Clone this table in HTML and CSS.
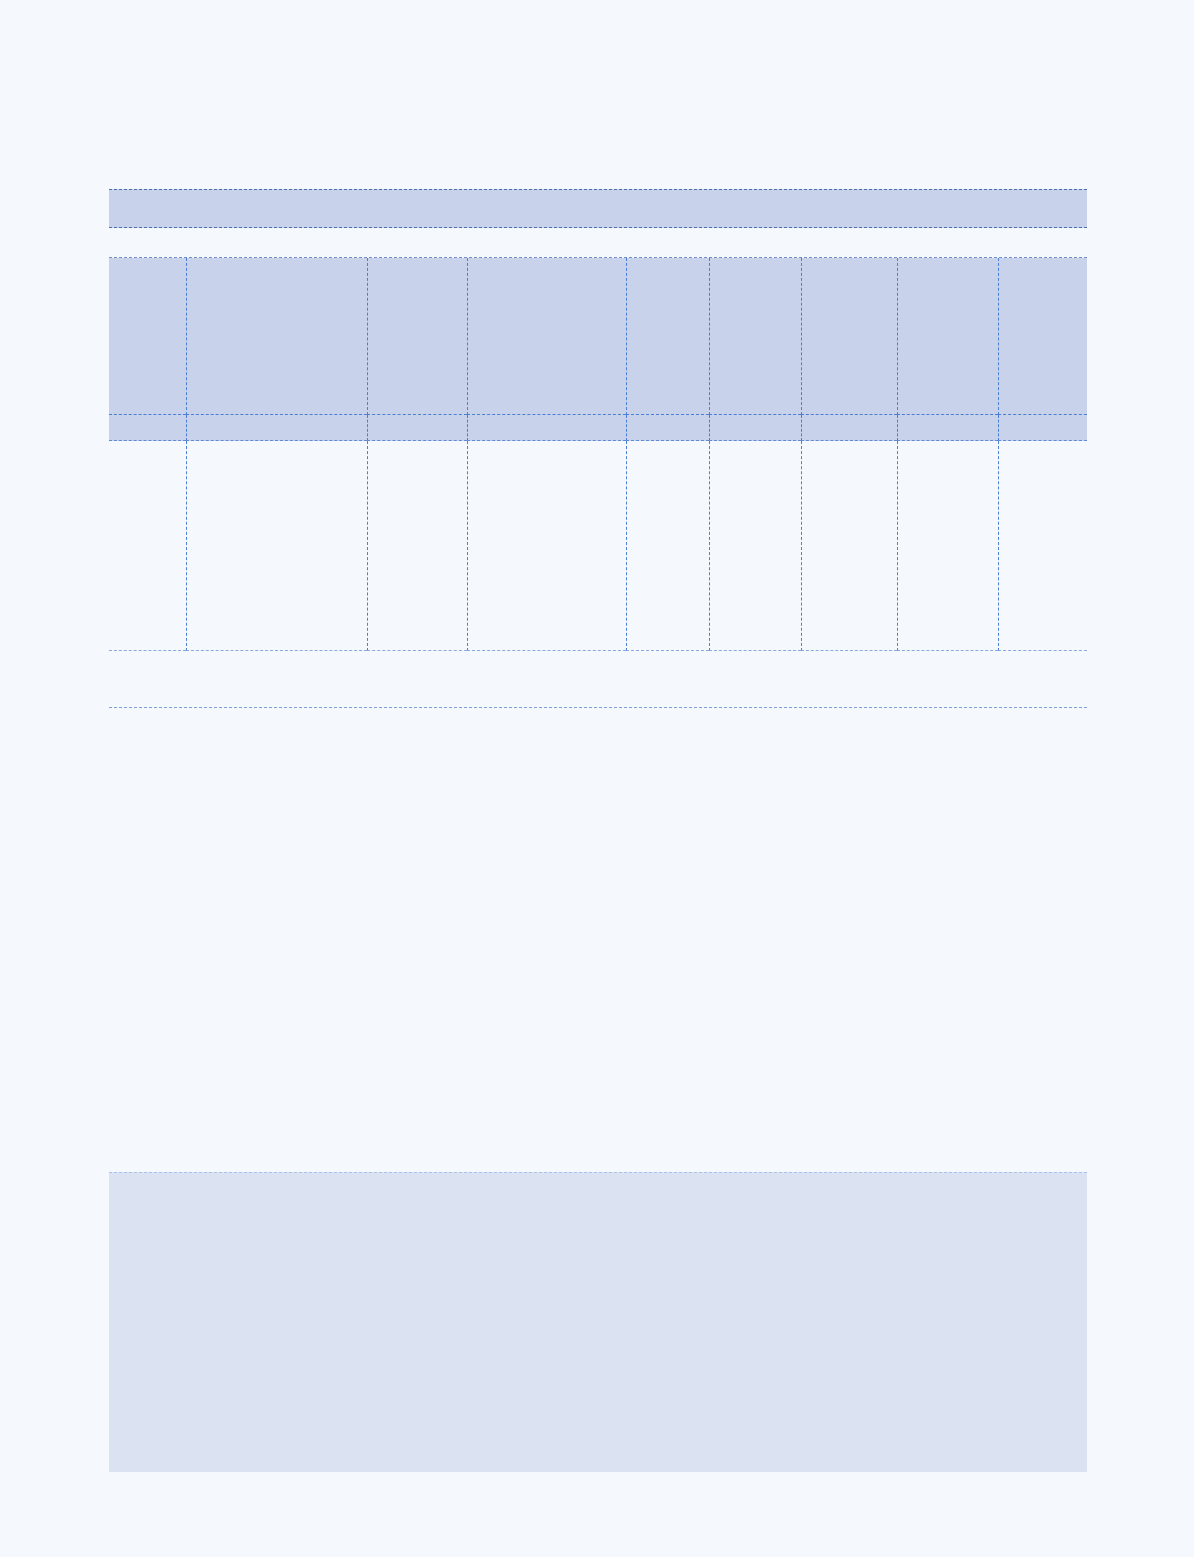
FILE: index.html
```html
<!DOCTYPE html>
<html lang="en">
<head>
<meta charset="utf-8">
<title>Layout</title>
<link rel="stylesheet" href="styles.css">
</head>
<body>
<main class="page">
  <div class="band"></div>
  <section class="grid">
    <div class="cell head1 first"></div><div class="cell head1"></div><div class="cell head1"></div><div class="cell head1"></div><div class="cell head1"></div><div class="cell head1"></div><div class="cell head1"></div><div class="cell head1"></div><div class="cell head1"></div>
    <div class="cell head2 first"></div><div class="cell head2"></div><div class="cell head2"></div><div class="cell head2"></div><div class="cell head2"></div><div class="cell head2"></div><div class="cell head2"></div><div class="cell head2"></div><div class="cell head2"></div>
    <div class="cell body first"></div><div class="cell body"></div><div class="cell body"></div><div class="cell body"></div><div class="cell body"></div><div class="cell body"></div><div class="cell body"></div><div class="cell body"></div><div class="cell body"></div>
    <div class="foot"></div>
  </section>
  <section class="panel"></section>
</main>
</body>
</html>
```
FILE: styles.css
```css
html, body {
  margin: 0;
  padding: 0;
  background: #f5f8fd;
  font-family: "Liberation Sans", Arial, sans-serif;
}

.page {
  width: 978px;
  margin: 0 auto;
  padding: 189px 0 86px 1px;
  box-sizing: content-box;
}

.band {
  height: 39px;
  box-sizing: border-box;
  background: #c8d2eb;
  border-top: 1px dashed #4e6fae;
  border-bottom: 1px dashed #4e6fae;
}

.grid {
  margin-top: 29px;
  display: grid;
  grid-template-columns: 77px 181px 100px 159px 83px 92px 96px 101px 89px;
  border-top: 1px dashed #6f8fcc;
}

.cell {
  box-sizing: border-box;
  border-left: 1px dashed #4a7fd4;
  border-bottom: 1px dashed #4a7fd4;
}

.cell.first {
  border-left: none;
}

.head1 {
  height: 157px;
  background: #c8d2eb;
}

.head2 {
  height: 26px;
  background: #c8d2eb;
  border-bottom-color: #5f8ad6;
}

.body {
  height: 210px;
  border-bottom-color: #8aa9de;
}

.foot {
  grid-column: 1 / -1;
  height: 57px;
  box-sizing: border-box;
  border-bottom: 1px dashed #7f9fd8;
}

.panel {
  margin-top: 464px;
  height: 300px;
  box-sizing: border-box;
  background: #dbe2f2;
  border-top: 1px dashed #a9c0e8;
}
```
